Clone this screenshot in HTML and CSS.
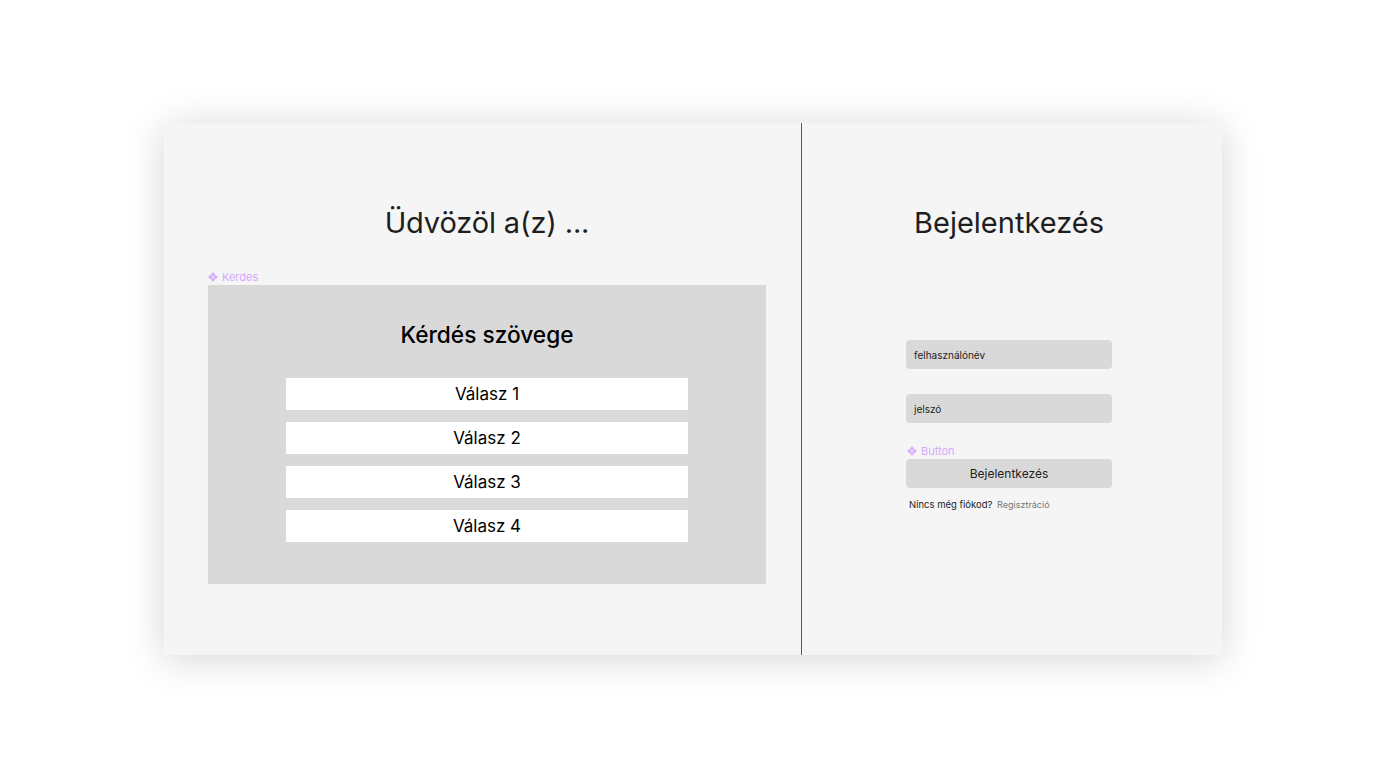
FILE: index.html
```html
<!DOCTYPE html>
<html lang="hu">
<head>
<meta charset="utf-8">
<title>Kvíz</title>
<link rel="stylesheet" href="styles.css">
</head>
<body>
<div class="frame">
  <section class="left">
    <h1 class="title">Üdvözöl a(z) ...</h1>
    <div class="comp-label">
      <svg class="comp-icon" viewBox="0 0 10 10" width="10" height="10"><path d="M5 0.2L7.2 2.4L5 4.6L2.8 2.4Z M5 5.4L7.2 7.6L5 9.8L2.8 7.6Z M2.4 2.8L4.6 5L2.4 7.2L0.2 5Z M7.6 2.8L9.8 5L7.6 7.2L5.4 5Z" fill="currentColor"/></svg>
      <span>Kerdes</span>
    </div>
    <div class="question">
      <h2 class="q-text">Kérdés szövege</h2>
      <div class="answers">
        <div class="answer">Válasz 1</div>
        <div class="answer">Válasz 2</div>
        <div class="answer">Válasz 3</div>
        <div class="answer">Válasz 4</div>
      </div>
    </div>
  </section>
  <div class="divider"></div>
  <section class="right">
    <h1 class="title">Bejelentkezés</h1>
    <div class="form">
      <div class="input first">felhasználónév</div>
      <div class="input second">jelszó</div>
      <div class="comp-label btn-label">
        <svg class="comp-icon" viewBox="0 0 10 10" width="10" height="10"><path d="M5 0.2L7.2 2.4L5 4.6L2.8 2.4Z M5 5.4L7.2 7.6L5 9.8L2.8 7.6Z M2.4 2.8L4.6 5L2.4 7.2L0.2 5Z M7.6 2.8L9.8 5L7.6 7.2L5.4 5Z" fill="currentColor"/></svg>
        <span>Button</span>
      </div>
      <div class="button">Bejelentkezés</div>
      <p class="signup">Nincs még fiókod? <span class="link">Regisztráció</span></p>
    </div>
  </section>
</div>
</body>
</html>
```
FILE: styles.css
```css
* { box-sizing: border-box; }
html, body { margin: 0; padding: 0; background: #ffffff; }
body {
  font-family: Inter, "Noto Sans", sans-serif;
  padding: 123px 0 0 164px;
  min-height: 100vh;
  color: #1e1e1e;
}
.frame {
  width: 1058px;
  height: 532px;
  background: #f5f5f5;
  display: flex;
  box-shadow: 0 4px 36px rgba(0, 0, 0, 0.17);
}
.left {
  width: 637px;
  padding: 82px 35px 0 44px;
  display: flex;
  flex-direction: column;
  align-items: stretch;
}
.divider {
  width: 1px;
  background: #5a5a5a;
}
.right {
  flex: 1;
  padding: 82px 6px 0 0;
  display: flex;
  flex-direction: column;
  align-items: center;
}
.title {
  margin: 0;
  font-size: 29px;
  line-height: 36px;
  font-weight: 400;
  color: #1e1e1e;
  text-align: center;
  white-space: nowrap;
}
.left .title { letter-spacing: -0.15px; }
.comp-label {
  margin-top: 29px;
  height: 14px;
  display: flex;
  align-items: center;
  gap: 4px;
  font-size: 11px;
  line-height: 14px;
  color: #d4aafd;
}
.comp-icon { display: block; }
.question {
  margin-top: 1px;
  height: 299px;
  background: #d9d9d9;
  display: flex;
  flex-direction: column;
  align-items: center;
  padding-top: 36px;
}
.q-text {
  margin: 0;
  font-size: 22.7px;
  line-height: 28px;
  font-weight: 500;
  color: #000;
}
.answers {
  margin-top: 29px;
  display: flex;
  flex-direction: column;
  gap: 12px;
}
.answer {
  width: 402px;
  height: 32px;
  background: #ffffff;
  display: flex;
  align-items: center;
  justify-content: center;
  padding-bottom: 1px;
  font-size: 17px;
  color: #000;
}
.form {
  width: 206px;
  display: flex;
  flex-direction: column;
}
.input {
  height: 29px;
  border-radius: 4px;
  background: #d9d9d9;
  display: flex;
  align-items: center;
  padding-left: 8px;
  font-size: 10px;
  color: #1e1e1e;
}
.input.first { margin-top: 99px; }
.input.second { margin-top: 25px; }
.btn-label { margin-top: 21px; padding-left: 1px; }
.button {
  margin-top: 1px;
  height: 29px;
  border-radius: 4px;
  background: #d9d9d9;
  display: flex;
  align-items: center;
  justify-content: center;
  font-size: 12px;
  color: #1e1e1e;
}
.signup {
  margin: 10px 0 0 3px;
  font-size: 9.5px;
  line-height: 13px;
  color: #1e1e1e;
}
.link { color: #757575; font-size: 9px; margin-left: 2px; }
```
